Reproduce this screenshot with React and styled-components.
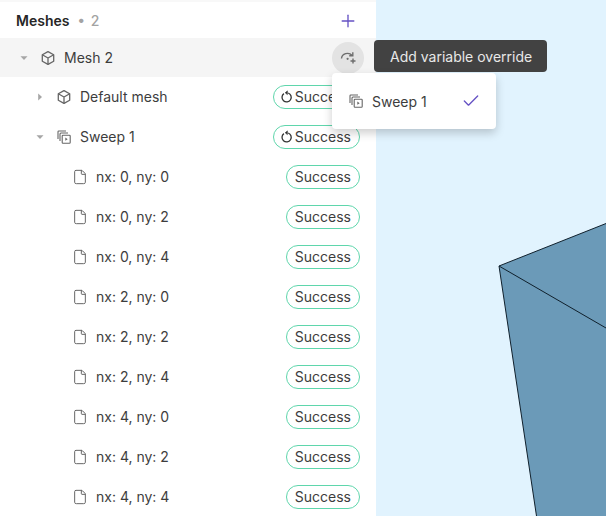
import React from "react";
import styled, { createGlobalStyle } from "styled-components";
import { File, Plus, Check } from "lucide-react";

const Global = createGlobalStyle`
  html, body { margin: 0; padding: 0; height: 100%; overflow: hidden; }
  body { font-family: Inter, "Liberation Sans", sans-serif; color: #3d3d3d; }
  #root { height: 100%; }
`;

const Page = styled.div`
  position: relative;
  display: flex;
  width: 606px;
  height: 516px;
  overflow: hidden;
`;
const Sidebar = styled.aside`
  flex: 0 0 376px;
  display: flex;
  flex-direction: column;
  background: #fff;
  overflow: hidden;
`;
const Header = styled.header`
  flex: 0 0 38px;
  display: flex;
  align-items: center;
  padding: 2px 18px 0 16px;
  box-sizing: border-box;
  border-top: 2px solid #f8f8f8;
  font-size: 14px;
  line-height: 20px;
`;
const Title = styled.span`
  font-weight: 600;
  color: #262626;
`;
const Count = styled.span`
  margin-left: 8px;
  color: #a3a3a3;
  font-weight: 500;
  word-spacing: 2px;
`;
const AddButton = styled.button`
  display: flex;
  margin-left: auto;
  padding: 0;
  border: 0;
  background: none;
  color: #6552c4;
`;
const Row = styled.div`
  flex: 0 0 ${(p) => (p.$active ? 39 : 40)}px;
  display: flex;
  align-items: center;
  gap: 8px;
  box-sizing: border-box;
  padding: 0 16px 0 ${(p) => 16 + p.$level * 16}px;
  background: ${(p) => (p.$active ? "#f5f5f5" : "transparent")};
  font-size: 14px;
  line-height: 20px;
`;
const CaretSlot = styled.span`
  flex: 0 0 16px;
  display: flex;
  align-items: center;
  justify-content: center;
  color: #a6a6a6;
`;
const IconSlot = styled.span`
  flex: 0 0 16px;
  display: flex;
  align-items: center;
  justify-content: center;
  color: #666;
`;
const Label = styled.span`
  flex: 1;
  white-space: nowrap;
`;
const Badge = styled.span`
  display: inline-flex;
  align-items: center;
  gap: 1px;
  box-sizing: border-box;
  height: 24px;
  padding: 0 8px 0 ${(p) => (p.$retry ? 6 : 8)}px;
  border: 1px solid #5fd6ac;
  border-radius: 12px;
  background: #fff;
  color: #3d3d3d;
  font-size: 14px;
  white-space: nowrap;
`;
const RoundButton = styled.button`
  display: flex;
  align-items: center;
  justify-content: center;
  width: 32px;
  height: 32px;
  margin-right: -4px;
  padding: 0;
  border: 0;
  border-radius: 50%;
  background: #e3e3e3;
  color: #6e6e6e;
`;
const Viewport = styled.main`
  flex: 1;
  background: #e1f3fe;
`;
const Scene = styled.svg`
  display: block;
  width: 100%;
  height: 100%;
`;
const Tooltip = styled.div`
  position: absolute;
  left: 374px;
  top: 40px;
  height: 32px;
  padding: 0 15px 0 16px;
  display: flex;
  align-items: center;
  border-radius: 4px;
  background: #424242;
  color: #e8e8e8;
  font-size: 14px;
  white-space: nowrap;
`;
const Menu = styled.div`
  position: absolute;
  left: 332px;
  top: 73px;
  width: 164px;
  height: 56px;
  display: flex;
  align-items: center;
  box-sizing: border-box;
  padding: 0 15px 0 16px;
  gap: 8px;
  border-radius: 4px;
  background: #fff;
  box-shadow: 0 4px 10px rgba(0, 0, 0, 0.2);
  font-size: 14px;
`;
const MenuCheck = styled.span`
  display: flex;
  color: #6552c4;
`;

const Caret = ({ open }) => (
  <svg width="8" height="8" viewBox="0 0 8 8" fill="currentColor">
    {open ? <path d="M0.5 2.2h7L4 6z" /> : <path d="M2.2 0.5v7L6 4z" />}
  </svg>
);
const CubeIcon = () => (
  <svg width="16" height="16" viewBox="0 0 16 16" fill="none" stroke="currentColor" strokeWidth="1.3" strokeLinejoin="round">
    <path d="M8 1.6L13.7 4.8V11.2L8 14.4L2.3 11.2V4.8Z" />
    <path d="M2.3 4.8L8 8L13.7 4.8M8 8V14.4" />
  </svg>
);
const SweepIcon = () => (
  <svg width="16" height="16" viewBox="0 0 16 16" fill="none" stroke="currentColor" strokeWidth="1.1">
    <path d="M2 10V2.8C2 2.4 2.4 2 2.8 2H10" />
    <path d="M4 12V5C4 4.5 4.5 4 5 4h7" />
    <rect x="6.2" y="6.2" width="8" height="8" rx="0.8" />
    <path d="M9.3 8.6v3.2l2.4-1.6z" fill="currentColor" stroke="none" />
  </svg>
);
const OverrideIcon = () => (
  <svg width="18" height="18" viewBox="0 0 18 18" fill="none" stroke="currentColor" strokeWidth="1.4">
    <path d="M2.5 9.5A6 5.5 0 0 1 13 6.3" />
    <path d="M13.8 3.2v3.6h-3.6" />
    <circle cx="8.6" cy="9.8" r="1.1" fill="currentColor" stroke="none" />
    <path d="M14 9.5v5M11.5 12h5" />
  </svg>
);
const RetryIcon = () => (
  <svg width="14" height="14" viewBox="0 0 14 14" fill="none" stroke="#333" strokeWidth="1.3">
    <path d="M3.9 3.6A4.6 4.6 0 1 0 8.2 3" />
    <path d="M7.4 0.9L5.2 2.8L7.4 4.6Z" fill="#333" strokeWidth="0.6" />
  </svg>
);

const Status = ({ retry }) => (
  <Badge $retry={retry}>
    {retry && <RetryIcon />}
    Success
  </Badge>
);

const runs = ["0, ny: 0", "0, ny: 2", "0, ny: 4", "2, ny: 0", "2, ny: 2", "2, ny: 4", "4, ny: 0", "4, ny: 2", "4, ny: 4"];

export default function App() {
  return (
    <>
      <Global />
      <Page>
        <Sidebar>
          <Header>
            <Title>Meshes</Title>
            <Count>• 2</Count>
            <AddButton aria-label="Add mesh">
              <Plus size={20} strokeWidth={1.6} />
            </AddButton>
          </Header>
          <Row $level={0} $active>
            <CaretSlot><Caret open /></CaretSlot>
            <IconSlot><CubeIcon /></IconSlot>
            <Label>Mesh 2</Label>
            <RoundButton aria-label="Add variable override"><OverrideIcon /></RoundButton>
          </Row>
          <Row $level={1}>
            <CaretSlot><Caret /></CaretSlot>
            <IconSlot><CubeIcon /></IconSlot>
            <Label>Default mesh</Label>
            <Status retry />
          </Row>
          <Row $level={1}>
            <CaretSlot><Caret open /></CaretSlot>
            <IconSlot><SweepIcon /></IconSlot>
            <Label>Sweep 1</Label>
            <Status retry />
          </Row>
          {runs.map((r) => (
            <Row $level={2} key={r}>
              <CaretSlot />
              <IconSlot><File size={16} strokeWidth={1.5} /></IconSlot>
              <Label>nx: {r}</Label>
              <Status />
            </Row>
          ))}
        </Sidebar>
        <Viewport>
          <Scene viewBox="376 0 230 516" preserveAspectRatio="none">
            <path d="M499 266L606 223.5V516H536.5Z" fill="#6b9ab8" />
            <path d="M606 223.5L499 266L536.5 516M499 266L606 328" fill="none" stroke="#10202c" strokeWidth="1" />
          </Scene>
        </Viewport>
        <Tooltip>Add variable override</Tooltip>
        <Menu>
          <IconSlot><SweepIcon /></IconSlot>
          <Label>Sweep 1</Label>
          <MenuCheck><Check size={20} strokeWidth={1.6} /></MenuCheck>
        </Menu>
      </Page>
    </>
  );
}
